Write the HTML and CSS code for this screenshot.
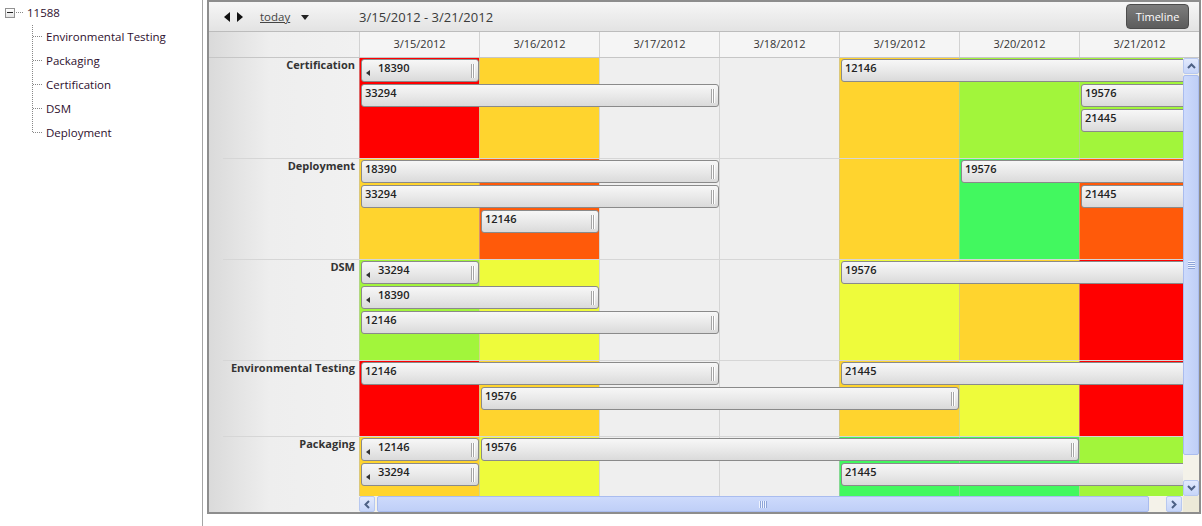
FILE: index.html
```html
<!DOCTYPE html>
<html lang="en">
<head>
    <meta charset="UTF-8">
    <meta name="viewport" content="width=device-width, initial-scale=1.0">
    <title>Resource Schedule - 11588</title>
    <link rel="stylesheet" href="styles.css">
</head>
<body>
    <div class="app">
        <aside class="tree">
            <div class="tree-root">
                <span class="toggle"></span>
                <span class="root-dots"></span>
                <span class="root-text">11588</span>
            </div>
            <ul class="tree-children">
                <li>Environmental Testing</li>
                <li>Packaging</li>
                <li>Certification</li>
                <li>DSM</li>
                <li>Deployment</li>
            </ul>
        </aside>

        <section class="scheduler">
            <div class="toolbar">
                <div class="toolbar-nav">
                    <span class="nav-prev"></span>
                    <span class="nav-next"></span>
                    <a class="today">today</a>
                    <span class="drop"></span>
                </div>
                <span class="range">3/15/2012 - 3/21/2012</span>
                <button class="view-btn">Timeline</button>
            </div>

            <div class="dates">
                <div class="dates-corner"></div>
                <div class="date">3/15/2012</div>
                <div class="date">3/16/2012</div>
                <div class="date">3/17/2012</div>
                <div class="date">3/18/2012</div>
                <div class="date">3/19/2012</div>
                <div class="date">3/20/2012</div>
                <div class="date">3/21/2012</div>
            </div>

            <div class="body">
                <div class="rows">
                    <!-- Certification -->
                    <div class="row">
                        <div class="label">Certification</div>
                        <div class="clip">
                            <div class="slots">
                                <div class="cell red"></div>
                                <div class="cell amber"></div>
                                <div class="cell"></div>
                                <div class="cell"></div>
                                <div class="cell amber"></div>
                                <div class="cell lime"></div>
                                <div class="cell lime"></div>
                                <div class="ev cont d1 w1 l1">18390</div>
                                <div class="ev d1 w3 l2">33294</div>
                                <div class="ev open d5 w3 l1">12146</div>
                                <div class="ev open d7 w1 l2">19576</div>
                                <div class="ev open d7 w1 l3">21445</div>
                            </div>
                        </div>
                    </div>

                    <!-- Deployment -->
                    <div class="row">
                        <div class="label">Deployment</div>
                        <div class="clip">
                            <div class="slots">
                                <div class="cell amber"></div>
                                <div class="cell orange"></div>
                                <div class="cell"></div>
                                <div class="cell"></div>
                                <div class="cell amber"></div>
                                <div class="cell green"></div>
                                <div class="cell orange"></div>
                                <div class="ev d1 w3 l1">18390</div>
                                <div class="ev d1 w3 l2">33294</div>
                                <div class="ev d2 w1 l3">12146</div>
                                <div class="ev open d6 w2 l1">19576</div>
                                <div class="ev open d7 w1 l2">21445</div>
                            </div>
                        </div>
                    </div>

                    <!-- DSM -->
                    <div class="row">
                        <div class="label">DSM</div>
                        <div class="clip">
                            <div class="slots">
                                <div class="cell lime"></div>
                                <div class="cell yellow"></div>
                                <div class="cell"></div>
                                <div class="cell"></div>
                                <div class="cell yellow"></div>
                                <div class="cell amber"></div>
                                <div class="cell red"></div>
                                <div class="ev cont d1 w1 l1">33294</div>
                                <div class="ev cont d1 w2 l2">18390</div>
                                <div class="ev d1 w3 l3">12146</div>
                                <div class="ev open d5 w3 l1">19576</div>
                            </div>
                        </div>
                    </div>

                    <!-- Environmental Testing -->
                    <div class="row">
                        <div class="label">Environmental Testing</div>
                        <div class="clip">
                            <div class="slots two">
                                <div class="cell red"></div>
                                <div class="cell amber"></div>
                                <div class="cell"></div>
                                <div class="cell"></div>
                                <div class="cell amber"></div>
                                <div class="cell yellow"></div>
                                <div class="cell red"></div>
                                <div class="ev d1 w3 l1">12146</div>
                                <div class="ev d2 w4 l2">19576</div>
                                <div class="ev open d5 w3 l1">21445</div>
                            </div>
                        </div>
                    </div>

                    <!-- Packaging -->
                    <div class="row">
                        <div class="label">Packaging</div>
                        <div class="clip">
                            <div class="slots two">
                                <div class="cell amber"></div>
                                <div class="cell yellow"></div>
                                <div class="cell"></div>
                                <div class="cell"></div>
                                <div class="cell green"></div>
                                <div class="cell green"></div>
                                <div class="cell lime"></div>
                                <div class="ev cont d1 w1 l1">12146</div>
                                <div class="ev d2 w5 l1">19576</div>
                                <div class="ev cont d1 w1 l2">33294</div>
                                <div class="ev open d5 w3 l2">21445</div>
                            </div>
                        </div>
                    </div>
                </div>

                <div class="vscroll">
                    <span class="sb-btn">
                        <svg width="9" height="6" viewBox="0 0 9 6"><polyline points="1,5 4.5,1.5 8,5" fill="none" stroke="#4d6185" stroke-width="2"/></svg>
                    </span>
                    <span class="v-thumb"><span class="grip-h"></span></span>
                    <span class="sb-track"></span>
                    <span class="sb-btn">
                        <svg width="9" height="6" viewBox="0 0 9 6"><polyline points="1,1 4.5,4.5 8,1" fill="none" stroke="#4d6185" stroke-width="2"/></svg>
                    </span>
                </div>
            </div>

            <div class="hbar">
                <div class="hbar-spacer"></div>
                <div class="hscroll">
                    <span class="sb-btn">
                        <svg width="6" height="9" viewBox="0 0 6 9"><polyline points="5,1 1.5,4.5 5,8" fill="none" stroke="#4d6185" stroke-width="2"/></svg>
                    </span>
                    <span class="h-thumb"><span class="grip-v"></span></span>
                    <span class="sb-track"></span>
                    <span class="sb-btn">
                        <svg width="6" height="9" viewBox="0 0 6 9"><polyline points="1,1 4.5,4.5 1,8" fill="none" stroke="#4d6185" stroke-width="2"/></svg>
                    </span>
                </div>
                <div class="sb-corner"></div>
            </div>
        </section>
    </div>
</body>
</html>
```

FILE: styles.css
```css
* {
    margin: 0;
    padding: 0;
    box-sizing: border-box;
}

body {
    font-family: 'Segoe UI', 'Open Sans', sans-serif;
    background: #fff;
    color: #333;
    overflow: hidden;
}

.app {
    display: flex;
    width: 1202px;
    height: 526px;
}

/* ---------- resource tree ---------- */

.tree {
    width: 203px;
    flex: none;
    border-right: 1px solid #a5a5a5;
    font-size: 11.5px;
    color: #2e0f2e;
}

.tree-root {
    display: flex;
    align-items: center;
    height: 25px;
}

.toggle {
    width: 10px;
    height: 10px;
    margin-left: 5px;
    border: 1px solid #919191;
    background: linear-gradient(#fff, #e4e4e4);
    display: flex;
    align-items: center;
    justify-content: center;
}

.toggle::after {
    content: "";
    width: 6px;
    height: 1px;
    background: #222;
}

.root-dots {
    width: 8px;
    height: 1px;
    margin-left: 1px;
    background: repeating-linear-gradient(to right, #888 0 1px, transparent 1px 2px);
}

.root-text {
    margin-left: 3px;
    margin-top: -1px;
}

.tree-children {
    list-style: none;
    margin-left: 32px;
}

.tree-children li {
    display: flex;
    align-items: center;
    height: 24px;
    padding-bottom: 1px;
}

.tree-children li::before {
    content: "";
    width: 11px;
    align-self: stretch;
    margin-right: 3px;
    margin-bottom: -1px;
    background:
        repeating-linear-gradient(to right, #888 0 1px, transparent 1px 2px) 1px 11px / 10px 1px no-repeat,
        repeating-linear-gradient(#888 0 1px, transparent 1px 2px) 0 0 / 1px 100% no-repeat;
}

.tree-children li:last-child::before {
    background-size: 10px 1px, 1px 12px;
}

/* ---------- scheduler frame ---------- */

.scheduler {
    margin-left: 4px;
    width: 994px;
    height: 514px;
    flex: none;
    border: 2px solid #8d8d8d;
    display: flex;
    flex-direction: column;
    background: #efefef;
}

.toolbar {
    height: 30px;
    flex: none;
    display: flex;
    align-items: center;
    border-bottom: 1px solid #bcbcbc;
    background: linear-gradient(#f6f6f6, #e3e3e3);
}

.toolbar-nav {
    width: 150px;
    display: flex;
    align-items: center;
    padding-left: 15px;
}

.nav-prev {
    border-right: 6px solid #111;
    border-top: 5px solid transparent;
    border-bottom: 5px solid transparent;
}

.nav-next {
    margin-left: 7px;
    border-left: 6px solid #111;
    border-top: 5px solid transparent;
    border-bottom: 5px solid transparent;
}

.today {
    margin-left: 17px;
    font-size: 11.5px;
    color: #444;
    text-decoration: underline;
}

.drop {
    margin-left: 11px;
    margin-top: 1px;
    border-top: 5px solid #222;
    border-left: 4px solid transparent;
    border-right: 4px solid transparent;
}

.range {
    font-size: 13px;
    color: #3a3a3a;
    margin-top: 1px;
}

.view-btn {
    margin-left: auto;
    margin-right: 10px;
    width: 63px;
    height: 25px;
    border: 1px solid #4c4c4c;
    border-radius: 4px;
    background: linear-gradient(#7d7d7d, #5c5c5c);
    color: #fff;
    font-family: inherit;
    font-size: 11px;
}

/* ---------- date header ---------- */

.dates {
    height: 26px;
    flex: none;
    display: flex;
    border-bottom: 1px solid #c6c6c6;
}

.dates-corner {
    width: 150px;
    flex: none;
    background: linear-gradient(to right, #dadada, #eeeeee 40%, #f1f1f1);
}

.date {
    width: 120px;
    flex: none;
    border-left: 1px solid #d2d2d2;
    background: #f5f5f5;
    text-align: center;
    font-size: 11px;
    line-height: 24px;
    color: #333;
}

/* ---------- resource rows ---------- */

.body {
    height: 438px;
    flex: none;
    display: flex;
}

.rows {
    width: 974px;
    overflow: hidden;
}

.row {
    display: flex;
}

.label {
    width: 150px;
    flex: none;
    padding: 0 4px 0 0;
    text-align: right;
    font-size: 11px;
    font-weight: bold;
    line-height: 13px;
    color: #333;
    background:
        linear-gradient(#d6d6d6, #d6d6d6) right bottom / 136px 1px no-repeat,
        linear-gradient(to right, #dadada, #eeeeee 40%, #f1f1f1);
}

.clip {
    width: 824px;
    overflow: hidden;
    border-bottom: 1px solid #d6d6d6;
}

.slots {
    display: grid;
    width: 840px;
    height: 100px;
    grid-template-columns: repeat(7, 120px);
    grid-template-rows: repeat(3, 25px) 1fr;
}

.slots.two {
    height: 75px;
    grid-template-rows: repeat(2, 25px) 1fr;
}

.cell {
    grid-row: 1 / -1;
    border-left: 1px solid rgba(190, 190, 190, 0.55);
    background: #efefef;
}

.cell:nth-child(1) { grid-column: 1; }
.cell:nth-child(2) { grid-column: 2; }
.cell:nth-child(3) { grid-column: 3; }
.cell:nth-child(4) { grid-column: 4; }
.cell:nth-child(5) { grid-column: 5; }
.cell:nth-child(6) { grid-column: 6; }
.cell:nth-child(7) { grid-column: 7; }

.red    { background: #ff0000; }
.amber  { background: #ffd42e; }
.yellow { background: #eefb3b; }
.lime   { background: #a2f53b; }
.green  { background: #42f85f; }
.orange { background: #ff5a0a; }

/* ---------- event bars ---------- */

.ev {
    display: flex;
    height: 23px;
    margin: 1px 0 1px 2px;
    padding-left: 3px;
    border: 1px solid #8a8a8a;
    border-radius: 3px;
    background: linear-gradient(#f7f7f7, #e8e8e8 55%, #dadada);
    font-size: 11px;
    font-weight: 600;
    line-height: 16px;
    color: #222;
}

/* continues from an earlier day */
.ev.cont::before {
    content: "";
    align-self: flex-start;
    margin: 10px 8px 0 1px;
    border-right: 4px solid #333;
    border-top: 3.5px solid transparent;
    border-bottom: 3.5px solid transparent;
}

/* resize grip on the end of the bar */
.ev::after {
    content: "";
    align-self: center;
    margin-left: auto;
    margin-right: 3px;
    width: 4px;
    height: 14px;
    background: linear-gradient(to right, #a6a6a6 0 1px, #fff 1px 2px, #a6a6a6 2px 3px, #fff 3px 4px);
}

.ev.open::after {
    display: none;
}

.d1 { grid-column-start: 1; }
.d2 { grid-column-start: 2; }
.d5 { grid-column-start: 5; }
.d6 { grid-column-start: 6; }
.d7 { grid-column-start: 7; }

.w1 { grid-column-end: span 1; }
.w2 { grid-column-end: span 2; }
.w3 { grid-column-end: span 3; }
.w4 { grid-column-end: span 4; }
.w5 { grid-column-end: span 5; }

.l1 { grid-row: 1; }
.l2 { grid-row: 2; }
.l3 { grid-row: 3; }

/* ---------- scrollbars ---------- */

.vscroll {
    width: 16px;
    flex: none;
    display: flex;
    flex-direction: column;
    background: #f4f2e9;
}

.sb-btn {
    width: 16px;
    height: 16px;
    flex: none;
    display: flex;
    align-items: center;
    justify-content: center;
    border: 1px solid #b7c8f0;
    border-radius: 2px;
    background: linear-gradient(#e2eafd, #c6d5f9);
}

.sb-track {
    flex: 1;
}

.v-thumb {
    height: 380px;
    flex: none;
    margin-top: 1px;
    display: flex;
    align-items: center;
    justify-content: center;
    border: 1px solid #a9bcef;
    border-radius: 2px;
    background: linear-gradient(to right, #cddafc, #bfcff7);
}

.grip-h {
    width: 7px;
    height: 8px;
    background: repeating-linear-gradient(#eef3ff 0 1px, #8da4d8 1px 2px);
}

.hbar {
    height: 16px;
    flex: none;
    display: flex;
}

.hbar-spacer {
    width: 150px;
    flex: none;
    background: linear-gradient(to right, #dadada, #eeeeee 40%, #f1f1f1);
}

.hscroll {
    width: 824px;
    flex: none;
    display: flex;
    background: #f4f2e9;
}

.h-thumb {
    width: 772px;
    flex: none;
    margin-left: 2px;
    display: flex;
    align-items: center;
    justify-content: center;
    border: 1px solid #a9bcef;
    border-radius: 2px;
    background: linear-gradient(#cddafc, #bfcff7);
}

.grip-v {
    width: 8px;
    height: 7px;
    background: repeating-linear-gradient(to right, #eef3ff 0 1px, #8da4d8 1px 2px);
}

.hscroll .sb-btn:last-child {
    margin-right: 1px;
}

.sb-corner {
    width: 16px;
    flex: none;
    background: #ece9d8;
}
```
